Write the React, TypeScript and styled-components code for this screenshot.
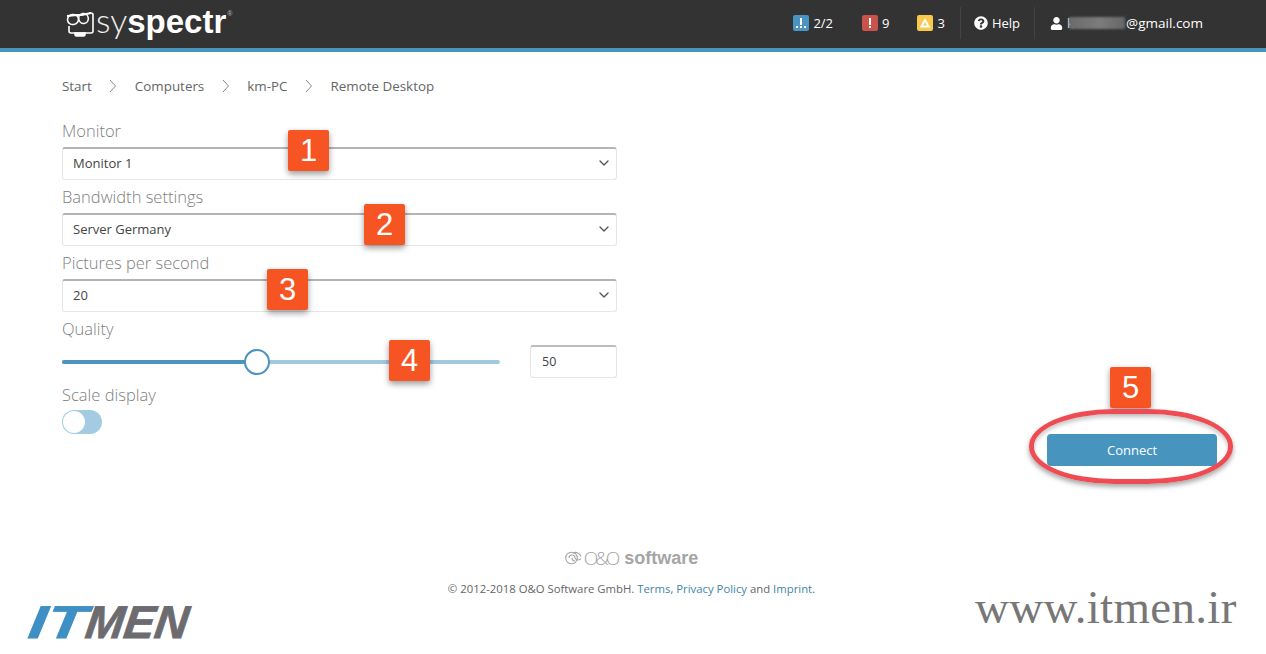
import React from 'react';
import styled, { createGlobalStyle } from 'styled-components';
import { FaQuestionCircle, FaUser } from 'react-icons/fa';
import { ChevronDown } from 'lucide-react';

const GlobalStyle = createGlobalStyle`
  html, body {
    margin: 0;
    padding: 0;
    background: #fff;
    overflow: hidden;
    font-family: "Open Sans", "Liberation Sans", sans-serif;
  }
`

const Page = styled.div`
  position: relative;
  width: 1266px;
  height: 654px;
  overflow: hidden;
  color: #555;
`

const Header = styled.header`
  height: 48px;
  background: #333;
  border-bottom: 4px solid #4794bf;
  display: flex;
  align-items: center;
  justify-content: space-between;
  padding: 0 63px 0 66px;
  color: #fff;
  font-size: 13px;
`

const Brand = styled.div`
  display: flex;
  align-items: flex-start;
  height: 48px;
`

const BrandName = styled.div`
  padding-top: 1px;
  font-family: "Liberation Sans", sans-serif;
  font-size: 33px;
  line-height: 38px;
  color: #fff;
  font-weight: 700;

  span {
    font-family: "Lato", sans-serif;
    font-size: 34px;
    font-weight: 300;
    color: #f0f0f0;
  }

  sup {
    font-size: 7px;
    line-height: 8px;
    vertical-align: 17px;
    font-weight: 400;
    margin-left: 1px;
    color: #bbb;
  }
`

const Nav = styled.nav`
  display: flex;
  align-items: center;
  height: 48px;
  padding-bottom: 2px;
  box-sizing: border-box;
`

const Stat = styled.div<{ $gap: number }>`
  display: flex;
  align-items: center;
  gap: 4px;
  margin-right: ${p => p.$gap}px;
`

const StatIcon = styled.span<{ $color: string }>`
  width: 16px;
  height: 16px;
  border-radius: 2px;
  background: ${p => p.$color};
  display: flex;
  align-items: center;
  justify-content: center;
`

const Divider = styled.div`
  width: 1px;
  height: 32px;
  background: #444;
`

const NavLink = styled.div`
  display: flex;
  align-items: center;
  gap: 4px;
  margin: 0 14px 0 13px;

  svg {
    font-size: 14px;
  }
`

const UserLink = styled(NavLink)`
  margin: 0 0 0 15px;
  font-size: 13.5px;

  svg {
    font-size: 13px;
  }
`

const Blurred = styled.span`
  display: inline-block;
  width: 56px;
  height: 12px;
  margin: 0 1px 0 -5px;
  vertical-align: -1px;
  background: linear-gradient(90deg, #6b6b6b, #7c7c7c 55%, #666);
  filter: blur(1px);
`

const Main = styled.main`
  padding: 24px 49px 0 62px;
`

const Breadcrumb = styled.div`
  display: flex;
  align-items: center;
  gap: 17.5px;
  height: 20px;
  font-size: 13.4px;
  color: #666;
`

const Form = styled.div`
  width: 555px;
  margin-top: 24px;
`

const Field = styled.div`
  margin-bottom: 6px;
`

const Label = styled.div`
  height: 24px;
  line-height: 22px;
  margin-bottom: 3px;
  font-size: 16.5px;
  font-weight: 300;
  color: #808080;
`

const SelectBox = styled.div`
  height: 33px;
  box-sizing: border-box;
  display: flex;
  align-items: center;
  justify-content: space-between;
  padding: 0 4px 2px 10px;
  border: 1px solid #e6e6e6;
  border-top: 2px solid #b4b4b4;
  border-radius: 3px;
  font-size: 13px;
  color: #444;
`

const SliderRow = styled.div`
  display: flex;
  align-items: center;
  gap: 30px;
  height: 33px;
  margin-bottom: 6px;
`

const Track = styled.div`
  position: relative;
  flex: 1;
  height: 4px;
  border-radius: 2px;
  background: #a0c9e0;
`

const TrackFill = styled.div`
  height: 100%;
  border-radius: 2px;
  background: #4a94bf;
`

const Knob = styled.div`
  position: absolute;
  top: -11px;
  width: 26px;
  height: 26px;
  margin-left: -13px;
  box-sizing: border-box;
  border: 2px solid #4a94bf;
  border-radius: 50%;
  background: #fff;
`

const NumberBox = styled.div`
  width: 87px;
  height: 33px;
  box-sizing: border-box;
  display: flex;
  align-items: center;
  padding: 0 0 2px 11px;
  border: 1px solid #e6e6e6;
  border-top: 2px solid #bdbdbd;
  border-radius: 3px;
  font-size: 12.5px;
  color: #444;
`

const Toggle = styled.div`
  width: 40px;
  height: 24px;
  margin-top: -1px;
  border-radius: 12px;
  background: #a3cce3;
  display: flex;
  align-items: center;
  padding-left: 1px;
  box-sizing: border-box;
`

const ToggleThumb = styled.div`
  width: 22px;
  height: 22px;
  border-radius: 50%;
  background: #fff;
`

const ActionRow = styled.div`
  display: flex;
  justify-content: flex-end;
`

const ConnectButton = styled.button`
  width: 170px;
  height: 32px;
  border: none;
  border-radius: 4px;
  padding: 0 0 1px;
  background: #4794bf;
  color: #fff;
  font-family: inherit;
  font-size: 13px;
`

const Footer = styled.footer`
  display: flex;
  flex-direction: column;
  align-items: center;
  padding: 80px 16px 0 0;
`

const FooterBrand = styled.div`
  display: flex;
  align-items: center;
  gap: 2px;
  height: 24px;
  color: #a5a5a5;
`

const BrandLight = styled.span`
  font-size: 19px;
  font-weight: 300;
  letter-spacing: -3px;
`

const BrandBold = styled.span`
  margin-left: 5px;
  font-family: "Liberation Sans", sans-serif;
  font-size: 18px;
  font-weight: 700;
`

const Copyright = styled.div`
  margin-top: 10px;
  font-size: 11.34px;
  line-height: 18px;
  color: #666;

  a {
    color: #3f85a8;
    text-decoration: none;
  }
`

const Callout = styled.div<{ $x: number; $y: number }>`
  position: absolute;
  left: ${p => p.$x}px;
  top: ${p => p.$y}px;
  width: 41px;
  height: 41px;
  border-radius: 2px;
  background: #f65423;
  box-shadow: 0 3px 6px rgba(0, 0, 0, 0.4);
  display: flex;
  align-items: center;
  justify-content: center;
  font-family: "Liberation Sans", sans-serif;
  font-size: 31px;
  color: #fff;
`

const Ring = styled.div`
  position: absolute;
  left: 1029px;
  top: 409px;
  width: 204px;
  height: 75px;
  box-sizing: border-box;
  border: 5px solid #ee4c52;
  border-radius: 85px / 37px;
  box-shadow: 0 3px 5px rgba(0, 0, 0, 0.35), inset 0 3px 4px rgba(0, 0, 0, 0.22);
`

const ItmenLogo = styled.div`
  position: absolute;
  left: 26px;
  top: 599px;
  display: flex;
  font-family: "Liberation Sans", sans-serif;
  font-size: 46px;
  line-height: 46px;
  font-weight: 700;
  font-style: italic;
  white-space: nowrap;
  -webkit-text-stroke: 0.8px currentColor;
`

const ItPart = styled.span`
  color: #3d8fc4;
  transform-origin: 0 100%;
  transform: skewX(-8deg) scaleX(1.4);
  margin-right: 16px;
`

const MenPart = styled.span`
  color: #6b6b70;
  transform-origin: 0 100%;
  transform: skewX(-8deg);
`

const Watermark = styled.div`
  position: absolute;
  left: 975px;
  top: 583px;
  font-family: "Liberation Serif", serif;
  font-size: 47px;
  line-height: 48px;
  letter-spacing: 0.3px;
  white-space: nowrap;
  color: #777;
`

const Crumb = () => (
  <svg width="8" height="14" viewBox="0 0 8 14" fill="none" stroke="#888" strokeWidth="1">
    <path d="M1 1l5.5 6L1 13" />
  </svg>
);

const GlassesLogo = () => (
  <svg width="28" height="28" viewBox="0 0 28 28" fill="none" stroke="#fff" strokeWidth="1.6" style={{ marginTop: 10, marginRight: 2 }}>
    <path d="M23 3h2a2 2 0 0 1 2 2v16a2 2 0 0 1-2 2H5a2 2 0 0 1-2-2v-5" />
    <path d="M1 6l10-1h5l9-2" strokeWidth="2" />
    <ellipse cx="7" cy="9.5" rx="5.5" ry="5" transform="rotate(-8 7 9.5)" />
    <ellipse cx="17.5" cy="8.5" rx="4.8" ry="5" transform="rotate(-8 17.5 8.5)" />
    <path d="M9 23h10v1.5a1.5 1.5 0 0 1-1.5 1.5h-7A1.5 1.5 0 0 1 9 24.5z" fill="#fff" />
  </svg>
);

const Swirl = () => (
  <svg width="17" height="14" viewBox="0 0 17 14" fill="none" stroke="#a5a5a5" strokeWidth="1.1">
    <circle cx="6.5" cy="7" r="5.8" />
    <path d="M4 7a3 3 0 0 1 6 0 3.5 3.5 0 0 0 6 .5" />
    <path d="M16 5.5a5.8 5.8 0 0 0-8-3.5M7 7a3 3 0 0 0 3 3" />
  </svg>
);

const FIELDS = [
  { label: 'Monitor', value: 'Monitor 1' },
  { label: 'Bandwidth settings', value: 'Server Germany' },
  { label: 'Pictures per second', value: '20' },
];

const CALLOUTS = [
  { n: 1, x: 288, y: 130 },
  { n: 2, x: 364, y: 204 },
  { n: 3, x: 267, y: 269 },
  { n: 4, x: 389, y: 340 },
  { n: 5, x: 1110, y: 367 },
];

const quality = 44.5;

const App: React.FC = () => {
  return (
    <Page>
      <GlobalStyle />
      <Header>
        <Brand>
          <GlassesLogo />
          <BrandName><span>sy</span>spectr<sup>®</sup></BrandName>
        </Brand>
        <Nav>
          <Stat $gap={29}>
            <StatIcon $color="#4a94c4">
              <svg width="12" height="12" viewBox="0 0 12 12" fill="#fff">
                <rect x="5" y="1" width="2" height="7" />
                <rect x="1" y="9" width="2" height="2" />
                <rect x="5" y="9" width="2" height="2" />
                <rect x="9" y="9" width="2" height="2" />
              </svg>
            </StatIcon>
            2/2
          </Stat>
          <Stat $gap={28}>
            <StatIcon $color="#c9524a">
              <svg width="12" height="12" viewBox="0 0 12 12" fill="#fff">
                <rect x="5" y="1" width="2" height="7" />
                <rect x="5" y="9" width="2" height="2" />
              </svg>
            </StatIcon>
            9
          </Stat>
          <Stat $gap={15}>
            <StatIcon $color="#f8c94c">
              <svg width="12" height="12" viewBox="0 0 12 12" fill="none" stroke="#fff" strokeWidth="2">
                <path d="M6 3l3.6 6.5H2.4z" />
              </svg>
            </StatIcon>
            3
          </Stat>
          <Divider />
          <NavLink><FaQuestionCircle />Help</NavLink>
          <Divider />
          <UserLink><FaUser /><span>k<Blurred />@gmail.com</span></UserLink>
        </Nav>
      </Header>

      <Main>
        <Breadcrumb>
          Start <Crumb /> Computers <Crumb /> km-PC <Crumb /> Remote Desktop
        </Breadcrumb>

        <Form>
          {FIELDS.map(f => (
            <Field key={f.label}>
              <Label>{f.label}</Label>
              <SelectBox>
                {f.value}
                <ChevronDown size={16} color="#555" strokeWidth={2} />
              </SelectBox>
            </Field>
          ))}
          <Label>Quality</Label>
          <SliderRow>
            <Track>
              <TrackFill style={{ width: `${quality}%` }} />
              <Knob style={{ left: `${quality}%` }} />
            </Track>
            <NumberBox>50</NumberBox>
          </SliderRow>
          <Label>Scale display</Label>
          <Toggle><ToggleThumb /></Toggle>
        </Form>

        <ActionRow>
          <ConnectButton>Connect</ConnectButton>
        </ActionRow>

        <Footer>
          <FooterBrand>
            <Swirl />
            <BrandLight>O&amp;O</BrandLight>
            <BrandBold>software</BrandBold>
          </FooterBrand>
          <Copyright>
            © 2012-2018 O&amp;O Software GmbH. <a>Terms</a>, <a>Privacy Policy</a> and <a>Imprint</a>.
          </Copyright>
        </Footer>
      </Main>

      {CALLOUTS.map(c => (
        <Callout key={c.n} $x={c.x} $y={c.y}>{c.n}</Callout>
      ))}
      <Ring />

      <ItmenLogo>
        <ItPart>IT</ItPart>
        <MenPart>MEN</MenPart>
      </ItmenLogo>
      <Watermark>www.itmen.ir</Watermark>
    </Page>
  );
}
export default App;
